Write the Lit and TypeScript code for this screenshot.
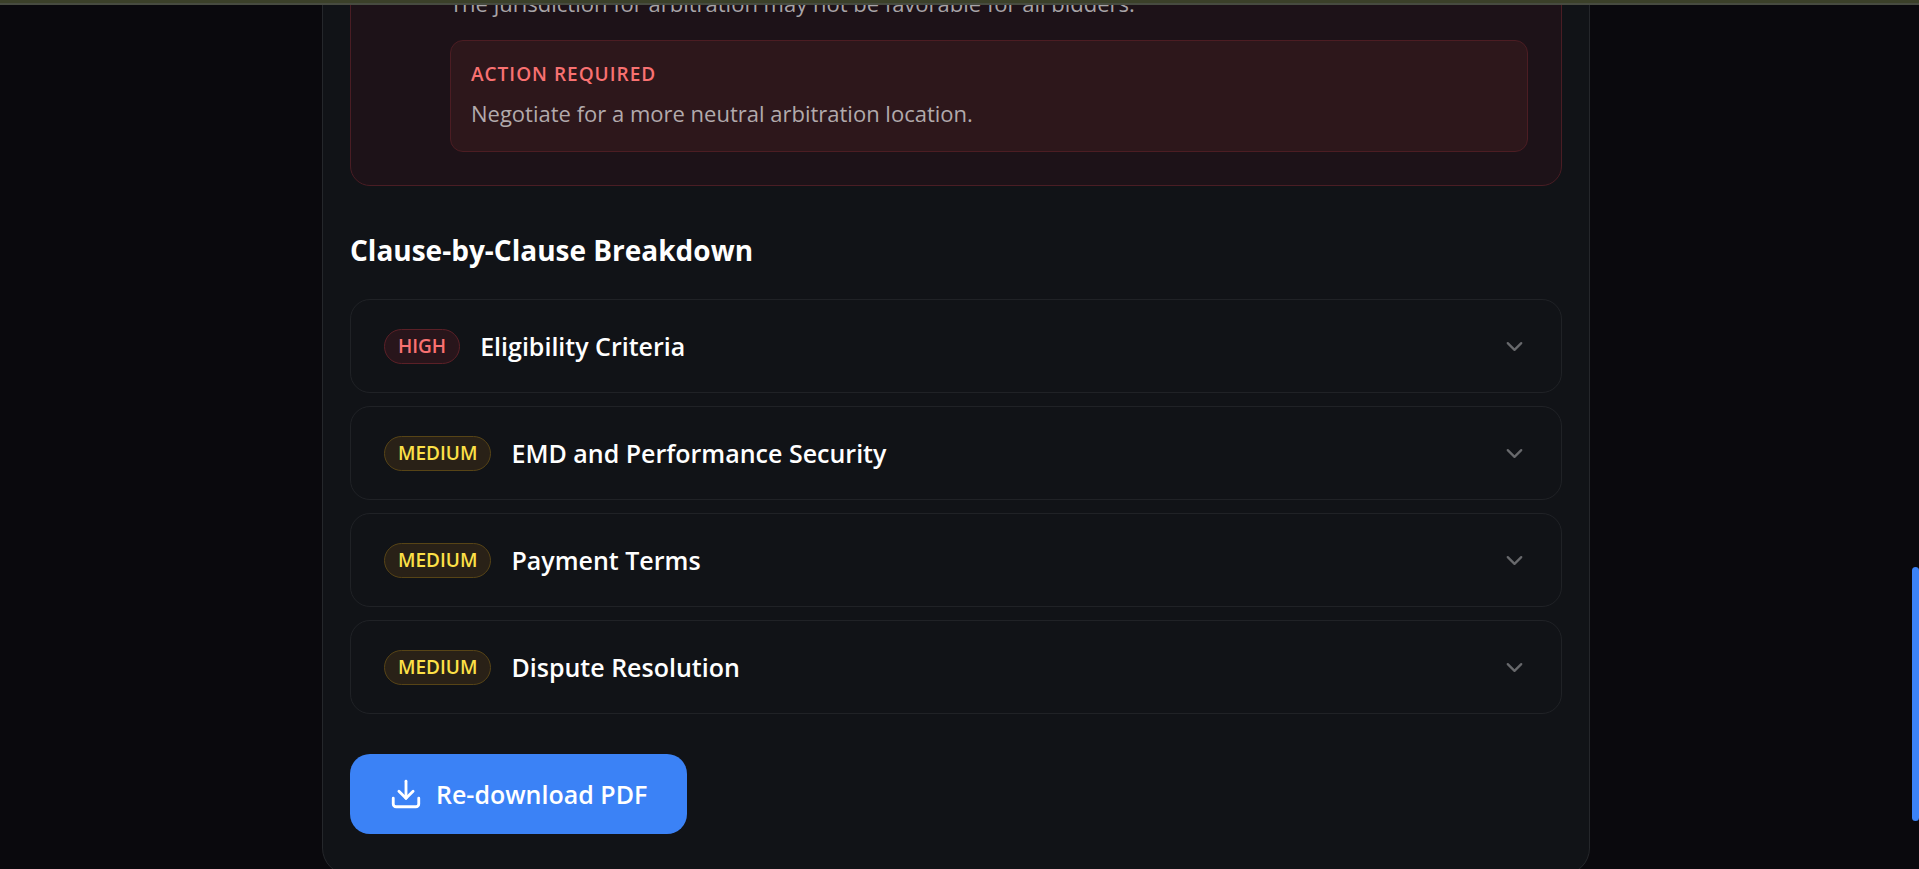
import { LitElement, html, css, svg } from "lit";
import { customElement, property, state } from "lit/decorators.js";
import { classMap } from "lit/directives/class-map.js";

type Risk = "high" | "medium";

interface Clause {
  title: string;
  risk: Risk;
}

const CLAUSES: Clause[] = [
  { title: "Eligibility Criteria", risk: "high" },
  { title: "EMD and Performance Security", risk: "medium" },
  { title: "Payment Terms", risk: "medium" },
  { title: "Dispute Resolution", risk: "medium" },
];

const chevronDown = svg`<path d="m6 9 6 6 6-6" />`;
const download = svg`
  <path d="M12 15V3" />
  <path d="M21 15v4a2 2 0 0 1-2 2H5a2 2 0 0 1-2-2v-4" />
  <path d="m7 10 5 5 5-5" />
`;

@customElement("clause-row")
export class ClauseRow extends LitElement {
  @property() heading = "";
  @property() risk: Risk = "medium";
  @state() private open = false;

  static styles = css`
    :host {
      display: block;
    }
    .row {
      box-sizing: border-box;
      display: flex;
      align-items: center;
      gap: 20px;
      width: 100%;
      padding: 28px 33px;
      border: 1px solid #202226;
      border-radius: 20px;
      background: transparent;
      color: #fff;
      font: inherit;
      text-align: left;
      cursor: pointer;
    }
    .badge {
      padding: 4px 13px;
      border: 1px solid;
      border-radius: 18px;
      font-size: 19px;
      font-weight: 600;
      line-height: 25px;
      text-transform: uppercase;
    }
    .high {
      color: #f87171;
      background: #28151b;
      border-color: #5b2027;
    }
    .medium {
      color: #fde047;
      background: #292117;
      border-color: #574416;
    }
    .title {
      flex: 1;
      font-size: 25px;
      font-weight: 600;
      line-height: 36px;
    }
    .chevron {
      width: 27px;
      height: 27px;
      fill: none;
      stroke: #68696c;
      stroke-width: 2;
      stroke-linecap: round;
      stroke-linejoin: round;
    }
    .flipped {
      transform: rotate(180deg);
    }
  `;

  render() {
    return html`
      <button
        class="row"
        aria-expanded=${this.open}
        @click=${() => (this.open = !this.open)}
      >
        <span class="badge ${this.risk}">${this.risk}</span>
        <span class="title">${this.heading}</span>
        <svg
          class=${classMap({ chevron: true, flipped: this.open })}
          viewBox="0 0 24 24"
          aria-hidden="true"
        >
          ${chevronDown}
        </svg>
      </button>
    `;
  }
}

@customElement("app-root")
export class AppRoot extends LitElement {
  static styles = css`
    :host {
      display: flex;
      position: relative;
      height: 100vh;
      overflow: hidden;
      background: #0a090d;
      color: #fff;
      font-family: "Open Sans", "Noto Sans", sans-serif;
      font-size: 22px;
    }
    .topbar {
      position: absolute;
      inset: 0 0 auto 0;
      height: 3px;
      border-bottom: 2px solid #474b40;
      background: #3b4029;
    }
    .page {
      flex: 1;
      min-width: 0;
    }
    .panel {
      box-sizing: border-box;
      max-width: 1268px;
      margin: -64px auto 0;
      padding: 27px 27px 40px;
      border: 1px solid #25272b;
      border-radius: 27px;
      background: #111317;
    }
    .risk {
      padding: 21px 33px 33px 99px;
      border: 1px solid #4a1d24;
      border-radius: 20px;
      background: #1d1218;
    }
    .text {
      margin: 0;
      color: #a8a4a7;
      line-height: 34px;
    }
    .action {
      margin-top: 20px;
      padding: 16px 20px 21px;
      border: 1px solid #4c1d23;
      border-radius: 13px;
      background: #2d171b;
    }
    .label {
      margin: 0 0 4px;
      color: #f87171;
      font-size: 19px;
      font-weight: 600;
      letter-spacing: 1px;
      line-height: 35px;
      text-transform: uppercase;
    }
    .action .text {
      color: #b2aaac;
    }
    .heading {
      margin: 44px 0 29px;
      font-size: 28px;
      font-weight: 700;
      line-height: 40px;
    }
    .clauses {
      display: grid;
      gap: 13px;
      margin: 0;
      padding: 0;
      list-style: none;
    }
    .download {
      display: inline-flex;
      align-items: center;
      gap: 13px;
      margin-top: 40px;
      padding: 22px 40px 22px 39px;
      border: 0;
      border-radius: 20px;
      background: #3b82f6;
      color: #fff;
      font: inherit;
      font-size: 25px;
      font-weight: 600;
      line-height: 36px;
      cursor: pointer;
    }
    .icon {
      width: 34px;
      height: 34px;
      fill: none;
      stroke: currentColor;
      stroke-width: 2;
      stroke-linecap: round;
      stroke-linejoin: round;
    }
    .scrollbar {
      flex: none;
      width: 7px;
      padding-top: 567px;
    }
    .thumb {
      height: 254px;
      border-radius: 4px;
      background: #3b82f6;
    }
  `;

  render() {
    return html`
      <main class="page">
        <section class="panel">
          <article class="risk">
            <p class="text">The jurisdiction for arbitration may not be favorable for all bidders.</p>
            <div class="action">
              <p class="label">Action Required</p>
              <p class="text">Negotiate for a more neutral arbitration location.</p>
            </div>
          </article>

          <h2 class="heading">Clause-by-Clause Breakdown</h2>
          <ul class="clauses">
            ${CLAUSES.map(
              (c) => html`<li><clause-row .heading=${c.title} .risk=${c.risk}></clause-row></li>`
            )}
          </ul>

          <button class="download">
            <svg class="icon" viewBox="0 0 24 24" aria-hidden="true">${download}</svg>
            Re-download PDF
          </button>
        </section>
      </main>
      <div class="scrollbar"><div class="thumb"></div></div>
      <div class="topbar"></div>
    `;
  }
}
